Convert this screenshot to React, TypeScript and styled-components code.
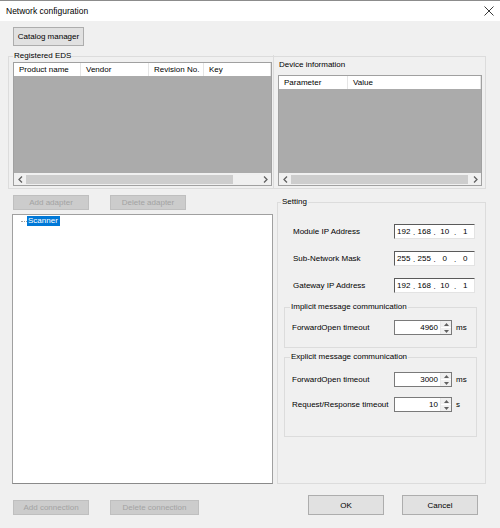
import React from 'react';
import styled, { createGlobalStyle } from 'styled-components';

const GlobalStyle = createGlobalStyle`
  html, body {
    margin: 0;
    padding: 0;
    background: #ffffff;
  }
  body {
    font-family: 'Liberation Sans', Arial, sans-serif;
    font-size: 8px;
    color: #000;
  }
  * {
    box-sizing: border-box;
  }
`;

const Window = styled.div`
  width: 500px;
  height: 528px;
  display: flex;
  flex-direction: column;
  border-top: 1px solid #8c8c8c;
  overflow: hidden;
`;

const TitleBar = styled.div`
  height: 20px;
  flex: none;
  background: #ffffff;
  display: flex;
  align-items: center;
  justify-content: space-between;
  padding: 0 6px 0 6px;
  font-size: 8.5px;
`;

const Body = styled.div`
  flex: 1;
  background: #f0f0f0;
  padding: 0 14px 0 8px;
  display: flex;
  flex-direction: column;
`;

const Button = styled.button<{ $w: number; $h: number; $off?: boolean }>`
  width: ${p => p.$w}px;
  height: ${p => p.$h}px;
  padding: 0;
  margin: 0;
  font: inherit;
  font-size: 8px;
  color: ${p => (p.$off ? '#a3a3a3' : '#000')};
  background: ${p => (p.$off ? '#cccccc' : '#e1e1e1')};
  border: 1px solid ${p => (p.$off ? '#bfbfbf' : '#adadad')};
  border-radius: 0;
  display: flex;
  align-items: center;
  justify-content: center;
  flex: none;
`;

const CatalogRow = styled.div`
  margin: 6px 0 0 5px;
`;

const GroupBox = styled.div<{ $mt?: number; $ml?: number; $mr?: number; $pb?: number }>`
  border: 1px solid #dcdcdc;
  margin: ${p => p.$mt ?? 0}px ${p => p.$mr ?? 0}px 0 ${p => p.$ml ?? 0}px;
  padding-bottom: ${p => p.$pb ?? 0}px;
`;

const Caption = styled.div<{ $x: number }>`
  width: max-content;
  height: 10px;
  line-height: 10px;
  margin: -6px 0 0 ${p => p.$x}px;
  padding: 0 1px;
  background: #f0f0f0;
`;

/* ---------- registered EDS / device information ---------- */

const EdsGrid = styled.div`
  display: grid;
  grid-template-columns: 259px 1px 1fr;
  column-gap: 1px;
  padding: 1px 3px 0 4px;
`;

const Divider = styled.div`
  background: #dcdcdc;
  margin: -7px 0 -3px 0;
  width: 1px;
`;

const DeviceCol = styled.div`
  display: flex;
  flex-direction: column;
  margin-left: 3px;
`;

const PanelLabel = styled.div`
  height: 10px;
  line-height: 10px;
  margin: -2px 0 0 1px;
`;

const ListView = styled.div<{ $h: number; $mt?: number }>`
  height: ${p => p.$h}px;
  margin-top: ${p => p.$mt ?? 0}px;
  border: 1px solid #a0a0a0;
  background: #ababab;
  display: flex;
  flex-direction: column;
`;

const Header = styled.div`
  height: 13px;
  background: #ffffff;
  display: flex;
  flex: none;
`;

const HeaderCell = styled.div<{ $w?: number }>`
  width: ${p => (p.$w ? `${p.$w}px` : 'auto')};
  flex: ${p => (p.$w ? 'none' : 1)};
  line-height: 13px;
  padding-left: 5px;
  border-right: 1px solid #e5e5e5;
  white-space: nowrap;
`;

const ListBody = styled.div`
  flex: 1;
`;

const HScroll = styled.div`
  height: 12px;
  flex: none;
  background: #f0f0f0;
  display: flex;
  align-items: center;
`;

const ScrollArrow = styled.div`
  width: 12px;
  height: 12px;
  display: flex;
  align-items: center;
  justify-content: center;
  flex: none;
`;

const Track = styled.div`
  flex: 1;
  height: 12px;
  display: flex;
  align-items: center;
`;

const Thumb = styled.div`
  height: 9px;
  background: #cdcdcd;
`;

/* ---------- lower part ---------- */

const Lower = styled.div`
  display: grid;
  grid-template-columns: 261px 209px;
  column-gap: 4px;
  padding-left: 4px;
`;

const LeftCol = styled.div`
  display: flex;
  flex-direction: column;
`;

const ButtonRow = styled.div<{ $mt: number }>`
  display: flex;
  gap: 21px;
  margin: ${p => p.$mt}px 0 0 1px;
`;

const Tree = styled.div`
  height: 270px;
  margin-top: 4px;
  background: #ffffff;
  border: 1px solid #a0a0a0;
  border-bottom-color: #8a8a8a;
  padding-top: 1px;
`;

const TreeNode = styled.div`
  display: flex;
  align-items: center;
  height: 10px;
  padding-left: 8px;
`;

const TreeLine = styled.span`
  width: 6px;
  border-top: 1px dotted #a0a0a0;
  margin-top: 1px;
`;

const TreeLabel = styled.span<{ $selected?: boolean }>`
  line-height: 10px;
  padding: 0 2px 0 1px;
  background: ${p => (p.$selected ? '#0078d7' : 'transparent')};
  color: ${p => (p.$selected ? '#ffffff' : '#000')};
`;

const RightCol = styled.div`
  display: flex;
  flex-direction: column;
`;

const SettingBox = styled(GroupBox)`
  height: 282px;
`;

const IpRows = styled.div`
  display: flex;
  flex-direction: column;
  gap: 12px;
  margin-top: 17px;
  padding: 0 10px 0 15px;
`;

const FieldRow = styled.div<{ $label: number }>`
  display: grid;
  grid-template-columns: ${p => p.$label}px auto 1fr;
  align-items: center;
  height: 15px;
`;

const RowLabel = styled.span`
  white-space: nowrap;
`;

const IpField = styled.div`
  width: 81px;
  height: 15px;
  background: #ffffff;
  border-top: 1px solid #5a5a5a;
  border-left: 1px solid #5a5a5a;
  border-right: 1px solid #e3e3e3;
  border-bottom: 1px solid #e3e3e3;
  display: grid;
  grid-template-columns: 1fr 3px 1fr 3px 1fr 3px 1fr;
  line-height: 13px;
`;

const IpPart = styled.span`
  text-align: center;
`;

const IpDot = styled.span`
  text-align: center;
  line-height: 15px;
`;

const SubBox = styled.div`
  display: flex;
  flex-direction: column;
  gap: 10px;
  padding-left: 7px;
`;

const Spin = styled.div`
  width: 58px;
  height: 15px;
  background: #ffffff;
  border: 1px solid #7a7a7a;
  display: flex;
`;

const SpinValue = styled.div`
  flex: 1;
  text-align: right;
  line-height: 13px;
  padding-right: 2px;
`;

const SpinButtons = styled.div`
  width: 11px;
  display: flex;
  flex-direction: column;
  border-left: 1px solid #e8e8e8;
`;

const SpinHalf = styled.div`
  flex: 1;
  background: #f0f0f0;
  display: flex;
  align-items: center;
  justify-content: center;
  &:first-child {
    border-bottom: 1px solid #ffffff;
  }
`;

const Unit = styled.span`
  padding-left: 4px;
`;

const DialogButtons = styled.div`
  display: flex;
  justify-content: flex-end;
  gap: 18px;
  margin-top: 11px;
  padding-right: 8px;
`;

const Chevron: React.FC<{ dir: 'left' | 'right' }> = ({ dir }) => (
  <svg width="5" height="7" viewBox="0 0 5 7">
    <path
      d={dir === 'left' ? 'M4 0.5 L1 3.5 L4 6.5' : 'M1 0.5 L4 3.5 L1 6.5'}
      fill="none"
      stroke="#606060"
      strokeWidth="1.3"
    />
  </svg>
);

const Tri: React.FC<{ up?: boolean }> = ({ up }) => (
  <svg width="5" height="3" viewBox="0 0 5 3">
    <path d={up ? 'M0 3 L2.5 0 L5 3 Z' : 'M0 0 L2.5 3 L5 0 Z'} fill="#606060" />
  </svg>
);

const ScrollBar: React.FC<{ lead: number; thumb: number }> = ({ lead, thumb }) => (
  <HScroll>
    <ScrollArrow>
      <Chevron dir="left" />
    </ScrollArrow>
    <Track>
      <Thumb style={{ marginLeft: lead, width: thumb }} />
    </Track>
    <ScrollArrow>
      <Chevron dir="right" />
    </ScrollArrow>
  </HScroll>
);

const IpAddress: React.FC<{ parts: string[] }> = ({ parts }) => (
  <IpField>
    {parts.map((p, i) => (
      <React.Fragment key={i}>
        {i > 0 && <IpDot>.</IpDot>}
        <IpPart>{p}</IpPart>
      </React.Fragment>
    ))}
  </IpField>
);

const SpinBox: React.FC<{ value: string }> = ({ value }) => (
  <Spin>
    <SpinValue>{value}</SpinValue>
    <SpinButtons>
      <SpinHalf>
        <Tri up />
      </SpinHalf>
      <SpinHalf>
        <Tri />
      </SpinHalf>
    </SpinButtons>
  </Spin>
);

const ipRows = [
  { label: 'Module IP Address', parts: ['192', '168', '10', '1'] },
  { label: 'Sub-Network Mask', parts: ['255', '255', '0', '0'] },
  { label: 'Gateway IP Address', parts: ['192', '168', '10', '1'] },
];

const App: React.FC = () => (
  <>
    <GlobalStyle />
    <Window>
      <TitleBar>
        <span>Network configuration</span>
        <svg width="10" height="10" viewBox="0 0 10 10">
          <path d="M0.5 0.5 L9.5 9.5 M9.5 0.5 L0.5 9.5" stroke="#222" strokeWidth="0.9" />
        </svg>
      </TitleBar>
      <Body>
        <CatalogRow>
          <Button $w={71} $h={19}>Catalog manager</Button>
        </CatalogRow>

        <GroupBox $mt={10} $pb={2}>
          <Caption $x={4}>Registered EDS</Caption>
          <EdsGrid>
            <ListView $h={124}>
              <Header>
                <HeaderCell $w={67}>Product name</HeaderCell>
                <HeaderCell $w={68}>Vendor</HeaderCell>
                <HeaderCell $w={55}>Revision No.</HeaderCell>
                <HeaderCell>Key</HeaderCell>
              </Header>
              <ListBody />
              <ScrollBar lead={0} thumb={207} />
            </ListView>
            <Divider />
            <DeviceCol>
              <PanelLabel>Device information</PanelLabel>
              <ListView $h={111} $mt={5}>
                <Header>
                  <HeaderCell $w={69}>Parameter</HeaderCell>
                  <HeaderCell>Value</HeaderCell>
                </Header>
                <ListBody />
                <ScrollBar lead={0} thumb={177} />
              </ListView>
            </DeviceCol>
          </EdsGrid>
        </GroupBox>

        <Lower>
          <LeftCol>
            <ButtonRow $mt={6}>
              <Button $w={76} $h={15} $off>Add adapter</Button>
              <Button $w={76} $h={15} $off>Delete adapter</Button>
            </ButtonRow>
            <Tree>
              <TreeNode>
                <TreeLine />
                <TreeLabel $selected>Scanner</TreeLabel>
              </TreeNode>
            </Tree>
            <ButtonRow $mt={16}>
              <Button $w={76} $h={15} $off>Add connection</Button>
              <Button $w={89} $h={15} $off>Delete connection</Button>
            </ButtonRow>
          </LeftCol>

          <RightCol>
            <SettingBox $mt={13}>
              <Caption $x={3}>Setting</Caption>
              <IpRows>
                {ipRows.map(r => (
                  <FieldRow key={r.label} $label={101}>
                    <RowLabel>{r.label}</RowLabel>
                    <IpAddress parts={r.parts} />
                  </FieldRow>
                ))}
              </IpRows>

              <GroupBox $mt={14} $ml={6} $mr={8} $pb={12}>
                <Caption $x={5}>Implicit message communication</Caption>
                <SubBox style={{ marginTop: 8 }}>
                  <FieldRow $label={102}>
                    <RowLabel>ForwardOpen timeout</RowLabel>
                    <SpinBox value="4960" />
                    <Unit>ms</Unit>
                  </FieldRow>
                </SubBox>
              </GroupBox>

              <GroupBox $mt={9} $ml={6} $mr={8} $pb={24}>
                <Caption $x={5}>Explicit message communication</Caption>
                <SubBox style={{ marginTop: 10 }}>
                  <FieldRow $label={102}>
                    <RowLabel>ForwardOpen timeout</RowLabel>
                    <SpinBox value="3000" />
                    <Unit>ms</Unit>
                  </FieldRow>
                  <FieldRow $label={102}>
                    <RowLabel>Request/Response timeout</RowLabel>
                    <SpinBox value="10" />
                    <Unit>s</Unit>
                  </FieldRow>
                </SubBox>
              </GroupBox>
            </SettingBox>

            <DialogButtons>
              <Button $w={76} $h={20}>OK</Button>
              <Button $w={76} $h={20}>Cancel</Button>
            </DialogButtons>
          </RightCol>
        </Lower>
      </Body>
    </Window>
  </>
);

export default App;
